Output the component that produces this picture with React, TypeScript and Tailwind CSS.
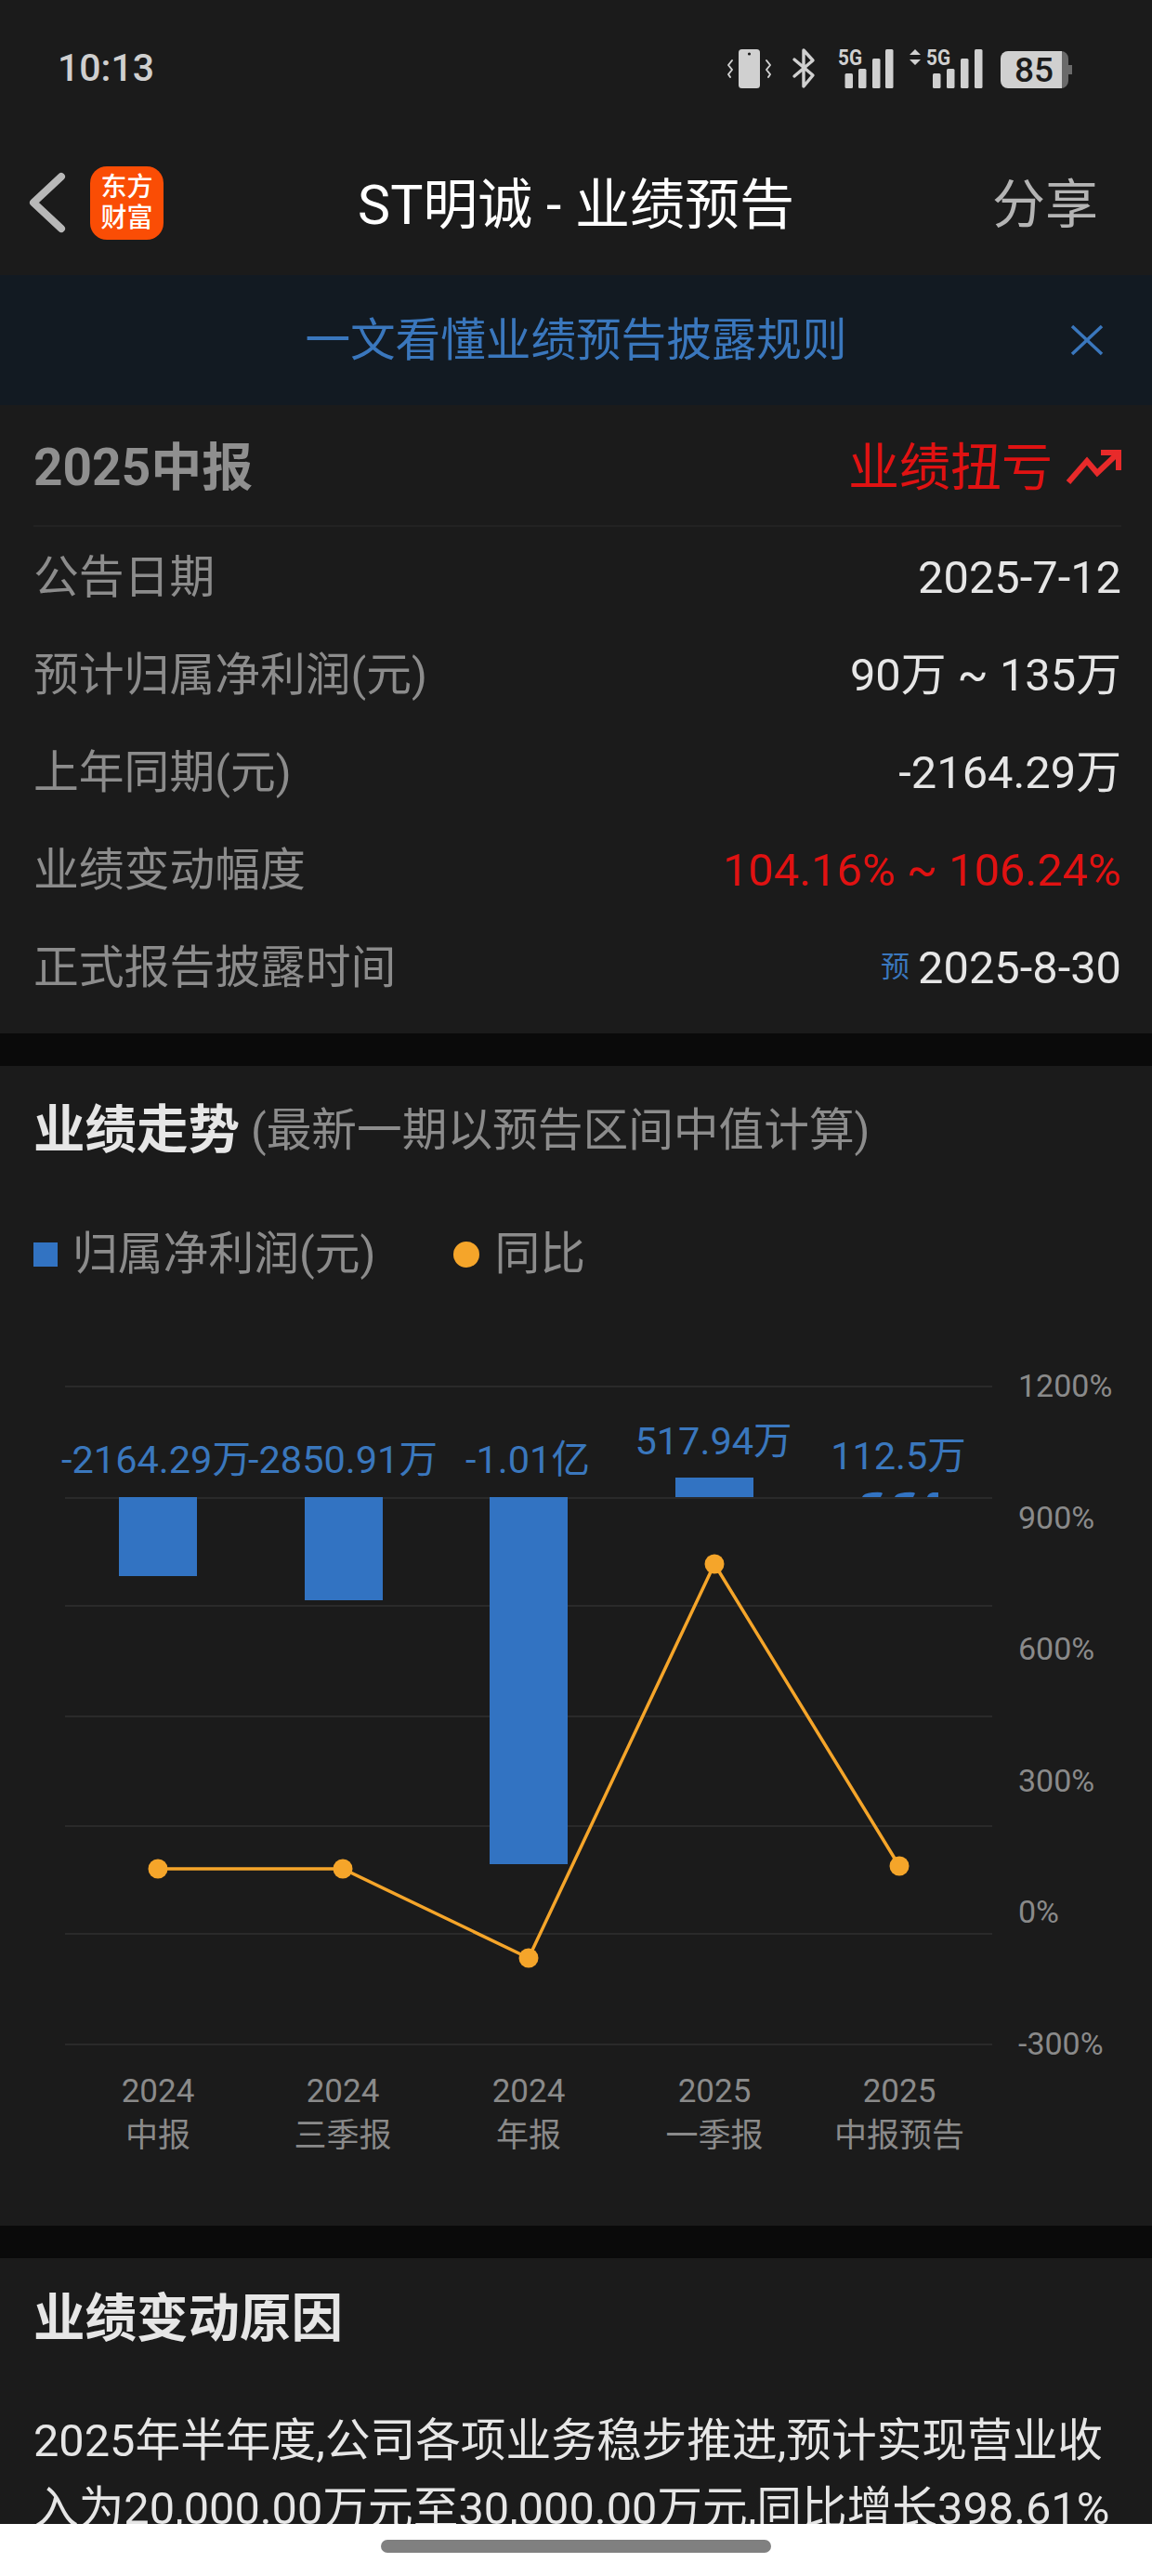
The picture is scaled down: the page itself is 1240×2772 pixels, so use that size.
const rows = [
  { label: '公告日期', value: '2025-7-12' },
  { label: '预计归属净利润(元)', value: '90万 ~ 135万' },
  { label: '上年同期(元)', value: '-2164.29万' },
  { label: '业绩变动幅度', value: '104.16% ~ 106.24%', red: true },
  { label: '正式报告披露时间', value: '2025-8-30', tag: '预' },
];

const gridY = [1492, 1612, 1728, 1847, 1965, 2081, 2200];
const axisY = [
  { y: 1491, text: '1200%' },
  { y: 1633, text: '900%' },
  { y: 1774, text: '600%' },
  { y: 1916, text: '300%' },
  { y: 2057, text: '0%' },
  { y: 2199, text: '-300%' },
];
const bars = [
  { x: 128, top: 1611, bottom: 1696 },
  { x: 328, top: 1611, bottom: 1722 },
  { x: 527, top: 1611, bottom: 2006 },
  { x: 727, top: 1590, bottom: 1611 },
];
const barLabels = [
  { x: 168, y: 1570, text: '-2164.29万' },
  { x: 369, y: 1570, text: '-2850.91万' },
  { x: 568, y: 1570, text: '-1.01亿' },
  { x: 768, y: 1550, text: '517.94万' },
  { x: 967, y: 1566, text: '112.5万' },
];
const points = [
  [170, 2011],
  [369, 2011],
  [569, 2107],
  [769, 1683],
  [968, 2008],
];
const xLabels = [
  { x: 170, a: '2024', b: '中报' },
  { x: 369, a: '2024', b: '三季报' },
  { x: 569, a: '2024', b: '年报' },
  { x: 769, a: '2025', b: '一季报' },
  { x: 968, a: '2025', b: '中报预告' },
];

function StatusIcons() {
  const barsA = [909.5, 924, 939, 953];
  const barsB = [1004, 1019, 1034, 1049];
  const tops = [79, 74, 63, 53];
  return (
    <svg width="380" height="60" viewBox="780 45 380 60" className="block">
      <rect x="795" y="53" width="23" height="42" rx="3.5" fill="#d0d0d0" />
      <circle cx="806.5" cy="58" r="1.6" fill="#1b1b1b" />
      <path d="M788 65l-4 5 4 5-4 5 2 3M825 65l4 5-4 5 4 5-2 3" fill="none" stroke="#d0d0d0" strokeWidth="2" strokeLinecap="round" strokeLinejoin="round" />
      <path d="M855 64l20 17-10 12V54l10 11-20 17" fill="none" stroke="#d0d0d0" strokeWidth="3.4" strokeLinecap="round" strokeLinejoin="round" />
      <text x="902" y="70" textLength="26" lengthAdjust="spacingAndGlyphs" className="font-[Roboto,sans-serif] text-[23px] font-bold" fill="#d0d0d0">5G</text>
      {barsA.map((x, i) => (
        <rect key={x} x={x} y={tops[i]} width="8.5" height={95 - tops[i]} rx="1.5" fill="#d0d0d0" />
      ))}
      <path d="M985 53l6 6h-12zM985 70l6-6h-12z" fill="#d0d0d0" />
      <text x="997" y="70" textLength="26" lengthAdjust="spacingAndGlyphs" className="font-[Roboto,sans-serif] text-[23px] font-bold" fill="#d0d0d0">5G</text>
      {barsB.map((x, i) => (
        <rect key={x} x={x} y={tops[i]} width="8.5" height={95 - tops[i]} rx="1.5" fill="#d0d0d0" />
      ))}
      <path d="M1136 55h6a8 8 0 0 1 8 8v7h4v10h-4v7a8 8 0 0 1-8 8h-6z" fill="#6a6a6a" />
      <path d="M1085 55h58v40h-58a8 8 0 0 1-8-8V63a8 8 0 0 1 8-8z" fill="#d0d0d0" />
      <text x="1113" y="88" textAnchor="middle" className="font-[Roboto,sans-serif] text-[37px] font-medium" fill="#1b1b1b">85</text>
    </svg>
  );
}

function Chart() {
  return (
    <svg width="1240" height="955" viewBox="0 1440 1240 955" className="block">
      {gridY.map((y) => (
        <line key={y} x1="70" x2="1068" y1={y} y2={y} stroke="#2a2a2a" strokeWidth="2" />
      ))}
      {bars.map((b) => (
        <rect key={b.x} x={b.x} y={b.top} width="84" height={b.bottom - b.top} fill="#3273c2" />
      ))}
      <path d="M928 1611q1-4 11-5t11 1l-2 4zM963 1611q1-4 11-5t11 1l-2 4zM998 1611q1-4 6-5h6v5z" fill="#3273c2" />
      {barLabels.map((l) => (
        <text key={l.text} x={l.x} y={l.y} textAnchor="middle" dominantBaseline="central" className="text-[41.5px]" fill="#3a77bd">{l.text}</text>
      ))}
      <polyline points={points.map((p) => p.join(',')).join(' ')} fill="none" stroke="#f5a52a" strokeWidth="3.5" />
      {points.map(([x, y]) => (
        <circle key={x} cx={x} cy={y} r="10.5" fill="#f5a52a" />
      ))}
      {axisY.map((l) => (
        <text key={l.text} x="1096" y={l.y} dominantBaseline="central" className="text-[34px]" fill="#8a8a8a">{l.text}</text>
      ))}
      {xLabels.map((l) => (
        <g key={l.b} fill="#8a8a8a" className="text-[35px]">
          <text x={l.x} y="2250" textAnchor="middle" dominantBaseline="central">{l.a}</text>
          <text x={l.x} y="2298" textAnchor="middle" dominantBaseline="central">{l.b}</text>
        </g>
      ))}
    </svg>
  );
}

export default function App() {
  return (
    <div className="h-[2772px] w-[1240px] flex flex-col overflow-hidden bg-[#0a0a0a] font-[Roboto,'Noto_Sans_CJK_SC',sans-serif]">
      <div className="flex-1 min-h-0 overflow-hidden">
        {/* status bar */}
        <div className="h-[140px] bg-[#1b1b1b] flex items-start">
          <div className="mt-[47px] ml-[62px] text-[41px] leading-[52px] font-medium text-[#cfcfcf]">10:13</div>
          <div className="ml-auto mr-[80px] mt-[45px]">
            <StatusIcons />
          </div>
        </div>

        {/* nav */}
        <div className="h-[156px] bg-[#1b1b1b] grid grid-cols-[1fr_auto_1fr] items-center">
          <div className="flex items-center pl-[30px] gap-[22px]">
            <svg width="45" height="66" viewBox="0 0 45 66">
              <path d="M36 5L6 33l30 28" fill="none" stroke="#b8b8b8" strokeWidth="8" strokeLinecap="round" strokeLinejoin="round" />
            </svg>
            <div className="w-[79px] h-[79px] rounded-[18px] bg-[#fa4d05] flex flex-col items-center justify-center text-white text-[28px] leading-[33px] font-medium">
              <span>东方</span>
              <span>财富</span>
            </div>
          </div>
          <div className="pt-[5px] text-[59px] leading-[70px] text-white">ST明诚 - 业绩预告</div>
          <div className="pt-[5px] text-right pr-[58px] text-[57px] leading-[70px] text-[#b4b4b4]">分享</div>
        </div>

        {/* banner */}
        <div className="h-[140px] bg-[#121a22] grid grid-cols-[1fr_auto_1fr] items-center">
          <div />
          <div className="pt-[2px] text-[48.6px] leading-[60px] text-[#3a77bd]">一文看懂业绩预告披露规则</div>
          <div className="flex justify-end pr-[52px]">
            <svg width="36" height="34" viewBox="0 0 36 34">
              <path d="M2 2l32 30M34 2L2 32" stroke="#3a77bd" strokeWidth="3.5" fill="none" />
            </svg>
          </div>
        </div>

        {/* summary */}
        <div className="bg-[#1b1b1b] pl-[36px] pr-[33px]">
          <div className="h-[131px] pt-[5px] flex items-center justify-between border-b-2 border-[#222222]">
            <span className="text-[55px] font-bold text-[#8f8f8f]">2025中报</span>
            <div className="flex items-center gap-[14px]">
              <span className="text-[55px] text-[#e01212]">业绩扭亏</span>
              <svg width="60" height="38" viewBox="0 0 60 38">
                <path d="M3 35l20-23 11 13L56 4M38 3h19v19" fill="none" stroke="#e82a2a" strokeWidth="6" />
              </svg>
            </div>
          </div>
          <div className="pt-[2px] pb-[18px]">
            {rows.map((r) => (
              <div key={r.label} className="h-[105px] flex items-center justify-between">
                <span className="text-[48.8px] text-[#8c8c8c]">{r.label}</span>
                <div className="flex items-center gap-[9px]">
                  {r.tag && <span className="text-[31px] text-[#3a77bd]">{r.tag}</span>}
                  <span className={r.red ? 'text-[48.8px] text-[#e01212]' : 'text-[48.8px] text-[#e6e6e6]'}>{r.value}</span>
                </div>
              </div>
            ))}
          </div>
        </div>

        {/* chart */}
        <div className="mt-[35px] h-[1248px] bg-[#1b1b1b]">
          <div className="h-[140px] pl-[36px] flex items-center gap-[12px]">
            <span className="text-[55.5px] font-bold text-[#e6e6e6]">业绩走势</span>
            <span className="text-[48.7px] text-[#8c8c8c]">(最新一期以预告区间中值计算)</span>
          </div>
          <div className="h-[126px] pl-[36px] flex items-center">
            <span className="w-[26px] h-[26px] bg-[#3273c2]" />
            <span className="ml-[16px] text-[48.8px] text-[#8c8c8c]">归属净利润(元)</span>
            <span className="ml-[84px] w-[28px] h-[28px] rounded-full bg-[#f5a52a]" />
            <span className="ml-[16px] text-[48.8px] text-[#8c8c8c]">同比</span>
          </div>
          <div className="mt-[27px]">
            <Chart />
          </div>
        </div>

        {/* reason */}
        <div className="mt-[35px] bg-[#1b1b1b] px-[36px]">
          <div className="h-[128px] pt-[3px] flex items-center text-[55.5px] font-bold text-[#e6e6e6]">业绩变动原因</div>
          <p className="pt-[32px] text-[48.7px] leading-[73px] text-[#e6e6e6]">
            2025年半年度,公司各项业务稳步推进,预计实现营业收入为20,000.00万元至30,000.00万元,同比增长398.61%
          </p>
        </div>
      </div>

      {/* home indicator */}
      <div className="h-[56px] bg-white flex justify-center pt-[17px]">
        <div className="w-[420px] h-[14px] rounded-full bg-[#808080]" />
      </div>
    </div>
  );
}
